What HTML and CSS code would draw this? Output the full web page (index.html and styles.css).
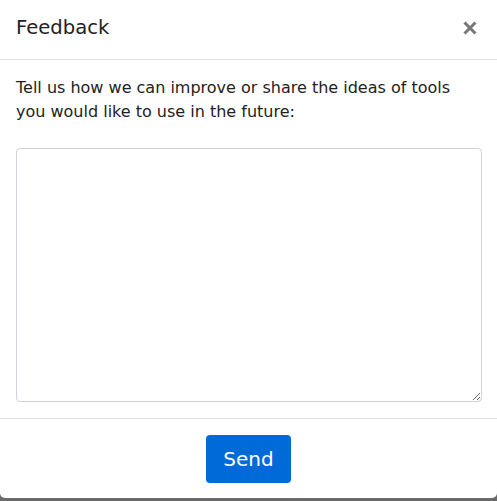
FILE: index.html
```html
<!DOCTYPE html>
<html>
<head>
<meta charset="utf-8">
<link rel="stylesheet" href="styles.css">
</head>
<body>
<div class="modal">
  <div class="modal-header">
    <h2 class="modal-title">Feedback</h2>
    <button class="close" aria-label="Close">
      <svg width="14" height="14" viewBox="0 0 14 14"><path d="M1.5 1.5 L12.5 12.5 M12.5 1.5 L1.5 12.5" stroke="#777" stroke-width="3"/></svg>
    </button>
  </div>
  <div class="modal-body">
    <p class="lead">Tell us how we can improve or share the ideas of tools you would like to use in the future:</p>
    <textarea class="field"></textarea>
  </div>
  <div class="modal-footer">
    <button class="btn-send">Send</button>
  </div>
</div>
</body>
</html>
```
FILE: styles.css
```css
html, body {
  margin: 0;
  padding: 0;
  background: #6b6b6b;
  height: 501px;
  overflow: hidden;
}
.modal {
  width: 497px;
  height: 498px;
  background: #fff;
  border-radius: 0 0 5px 5px;
  box-sizing: border-box;
  display: flex;
  flex-direction: column;
  font-family: "DejaVu Sans", Verdana, sans-serif;
  color: #222;
}
.modal-header {
  height: 60px;
  box-sizing: border-box;
  border-bottom: 1px solid #dee2e6;
  display: flex;
  align-items: center;
  justify-content: space-between;
  padding: 0 20px 4px 16px;
}
.modal-title {
  margin: 0;
  font-size: 19.6px;
  font-weight: normal;
  color: #222;
}
.close {
  border: 0;
  background: none;
  padding: 0;
  display: flex;
  cursor: pointer;
}
.modal-body {
  padding: 16px 15px 16px 16px;
  display: flex;
  flex-direction: column;
}
.lead {
  margin: 0 0 24px;
  font-size: 16px;
  line-height: 24px;
  color: #222;
}
.field {
  height: 254px;
  box-sizing: border-box;
  border: 1px solid #ced4da;
  border-radius: 4px;
  resize: vertical;
  display: block;
  width: 100%;
}
.modal-footer {
  border-top: 1px solid #dee2e6;
  display: flex;
  justify-content: center;
  padding-top: 16px;
}
.btn-send {
  width: 85px;
  height: 48px;
  border: 0;
  border-radius: 4px;
  background: #006ad8;
  color: #fff;
  font-family: "DejaVu Sans", Verdana, sans-serif;
  font-size: 20px;
}
```
